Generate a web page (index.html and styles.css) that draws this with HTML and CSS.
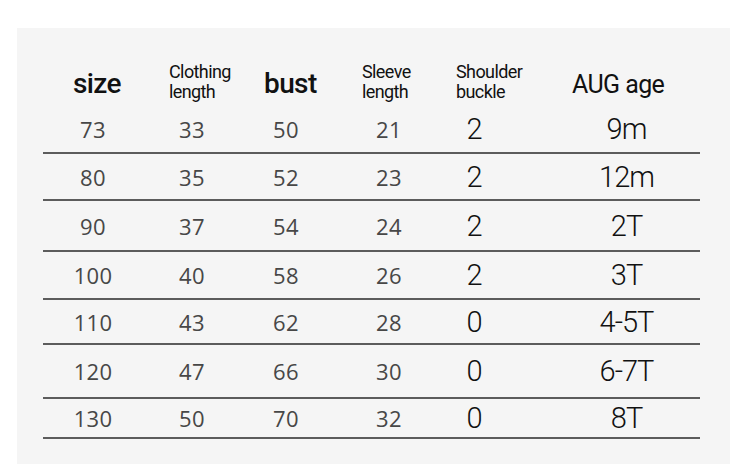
FILE: index.html
```html
<!DOCTYPE html>
<html>
<head>
<meta charset="utf-8">
<link rel="stylesheet" href="styles.css">
</head>
<body>
<div class="panel">
  <div class="table">
    <div class="row head">
      <div class="h big c1">size</div>
      <div class="h small c2">Clothing<br>length</div>
      <div class="h big c3">bust</div>
      <div class="h small c4">Sleeve<br>length</div>
      <div class="h small c5">Shoulder<br>buckle</div>
      <div class="h age c6">AUG age</div>
    </div>
    <div class="row data"><div class="n">73</div><div class="n">33</div><div class="n">50</div><div class="n">21</div><div class="t">2</div><div class="t a">9m</div></div>
    <div class="row data"><div class="n">80</div><div class="n">35</div><div class="n">52</div><div class="n">23</div><div class="t">2</div><div class="t a">12m</div></div>
    <div class="row data"><div class="n">90</div><div class="n">37</div><div class="n">54</div><div class="n">24</div><div class="t">2</div><div class="t a">2T</div></div>
    <div class="row data"><div class="n">100</div><div class="n">40</div><div class="n">58</div><div class="n">26</div><div class="t">2</div><div class="t a">3T</div></div>
    <div class="row data"><div class="n">110</div><div class="n">43</div><div class="n">62</div><div class="n">28</div><div class="t">0</div><div class="t a">4-5T</div></div>
    <div class="row data"><div class="n">120</div><div class="n">47</div><div class="n">66</div><div class="n">30</div><div class="t">0</div><div class="t a">6-7T</div></div>
    <div class="row data"><div class="n">130</div><div class="n">50</div><div class="n">70</div><div class="n">32</div><div class="t">0</div><div class="t a">8T</div></div>
  </div>
</div>
</body>
</html>
```

FILE: styles.css
```css
html, body {
  margin: 0;
  padding: 0;
  background: #ffffff;
}
body {
  width: 750px;
  height: 464px;
  overflow: hidden;
  font-family: Roboto, "Liberation Sans", sans-serif;
}
.panel {
  margin: 28px 0 0 17px;
  width: 713px;
  height: 436px;
  background: #f5f5f5;
  box-sizing: border-box;
  padding: 29px 30px 0 26px;
}
.row {
  display: grid;
  grid-template-columns: 100px 98px 90px 116px 54px 199px;
  align-items: center;
}
.head {
  height: 49px;
}
.data {
  border-bottom: 2px solid #5c5c5c;
  box-sizing: border-box;
  height: 47px;
}
.data:nth-child(2) { height: 48px; }
.data:nth-child(3) { height: 47px; }
.data:nth-child(4) { height: 51px; }
.data:nth-child(5) { height: 48px; }
.data:nth-child(6) { height: 45px; }
.data:nth-child(7) { height: 54px; }
.data:nth-child(8) { height: 40px; }

.h {
  justify-self: start;
  color: #111;
  white-space: nowrap;
}
.big {
  font-size: 28px;
  font-weight: 500;
  letter-spacing: -0.6px;
  line-height: 34px;
  padding-top: 4px;
}
.small {
  font-size: 18px;
  line-height: 20px;
  letter-spacing: -0.6px;
  font-weight: 400;
}
.age {
  font-size: 25px;
  font-weight: 400;
  letter-spacing: -0.6px;
  line-height: 30px;
  padding-top: 6px;
}
.c1 { padding-left: 30px; }
.c2 { padding-left: 26px; }
.c3 { padding-left: 23px; }
.c4 { padding-left: 31px; }
.c5 { padding-left: 9px; }
.c6 { padding-left: 71px; }

.n {
  text-align: center;
  font-family: "Open Sans", "Noto Sans", sans-serif;
  font-size: 22px;
  color: #474747;
  letter-spacing: 0.3px;
}
.t {
  text-align: center;
  font-family: Roboto, "Liberation Sans", sans-serif;
  font-weight: 300;
  font-size: 29px;
  color: #111;
  letter-spacing: -1px;
}
.a {
  padding-left: 52px;
}
```
